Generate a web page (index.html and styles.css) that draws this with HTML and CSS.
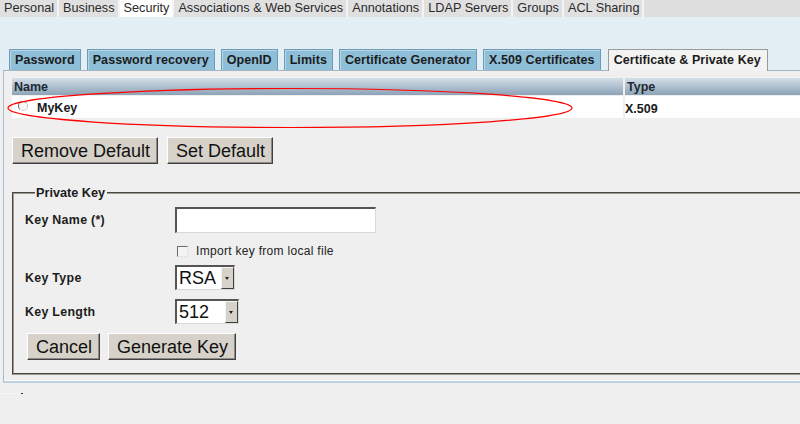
FILE: index.html
```html
<!DOCTYPE html>
<html>
<head>
<meta charset="utf-8">
<link rel="stylesheet" href="styles.css">
</head>
<body>
<div class="topnav">
  <span class="ttab">Personal</span>
  <span class="ttab">Business</span>
  <span class="ttab active">Security</span>
  <span class="ttab">Associations &amp; Web Services</span>
  <span class="ttab">Annotations</span>
  <span class="ttab">LDAP Servers</span>
  <span class="ttab">Groups</span>
  <span class="ttab">ACL Sharing</span>
</div>
<div class="bluebar">
  <span class="stab">Password</span>
  <span class="stab">Password recovery</span>
  <span class="stab">OpenID</span>
  <span class="stab">Limits</span>
  <span class="stab">Certificate Generator</span>
  <span class="stab">X.509 Certificates</span>
  <span class="stab active">Certificate &amp; Private Key</span>
</div>
<div class="panel">
  <div class="grid">
    <div class="th">Name</div>
    <div class="th">Type</div>
    <div class="td name"><span class="radio"></span>MyKey</div>
    <div class="td">X.509</div>
  </div>
  <div class="btnrow">
    <span class="btn">Remove Default</span>
    <span class="btn">Set Default</span>
  </div>
  <fieldset class="fs">
    <legend class="lg">Private Key</legend>
    <div class="frow r1">
      <span class="lbl">Key Name (*)</span>
      <span class="input"></span>
    </div>
    <div class="frow r2">
      <span class="lbl"></span>
      <span class="chk"><span class="cbox"></span>Import key from local file</span>
    </div>
    <div class="frow r3">
      <span class="lbl">Key Type</span>
      <span class="sel w60"><span class="val">RSA</span><span class="arr"></span></span>
    </div>
    <div class="frow r4">
      <span class="lbl">Key Length</span>
      <span class="sel w64"><span class="val">512</span><span class="arr"></span></span>
    </div>
    <div class="frow r5">
      <span class="btn">Cancel</span>
      <span class="btn">Generate Key</span>
    </div>
  </fieldset>
</div>
<div class="foot"><span class="dots"></span><span class="dot"></span></div>
<svg class="mark" width="800" height="424" viewBox="0 0 800 424"><ellipse cx="290" cy="108" rx="282" ry="19.5" fill="none" stroke="#ff0000" stroke-width="1.2"/></svg>
</body>
</html>
```
FILE: styles.css
```css
* { box-sizing: border-box; }
html, body { margin: 0; padding: 0; }
body {
  width: 800px;
  height: 424px;
  overflow: hidden;
  background: #efefef;
  font-family: "Liberation Sans", Arial, sans-serif;
  color: #222;
  position: relative;
}
.topnav {
  display: flex;
  height: 17px;
  background: #dedede;
}
.ttab {
  display: block;
  height: 17px;
  line-height: 16px;
  padding: 0 3px 0 4px;
  font-size: 12.7px;
  color: #2a2a2a;
  background: #e0e0e0;
  border-right: 2px solid #f4f4f4;
}
.ttab.active { background: #ffffff; }
.bluebar {
  height: 53px;
  background: #e3eef5;
  display: flex;
  align-items: flex-end;
  padding-left: 9px;
  gap: 6px;
  position: relative;
  z-index: 2;
}
.stab {
  display: block;
  height: 21px;
  line-height: 20px;
  padding: 0 5px;
  font-size: 12.5px;
  font-weight: bold;
  letter-spacing: 0.08px;
  color: #1c1c1c;
  background: #8ebed8;
  border: 1px solid #6f9bb4;
  border-bottom: none;
  box-shadow: inset 1px 1px 0 #b4d6e8;
}
.stab.active {
  background: #f3f3f3;
  border-color: #9a9a9a;
  box-shadow: none;
  height: 22px;
  margin-bottom: -1px;
  margin-left: 1px;
  padding: 0 6px 0 5px;
}
.panel {
  margin-left: 3px;
  height: 313px;
  border-top: 1px solid #a4b6c4;
  border-left: 1px solid #a9bccb;
  border-bottom: 2px solid #bcd1e2;
  box-shadow: inset 0 -1px 0 #ffffff;
  padding: 6px 0 0 8px;
  overflow: hidden;
}
.grid {
  display: grid;
  grid-template-columns: 611px 1fr;
  column-gap: 2px;
}
.th {
  height: 18px;
  line-height: 18px;
  padding-left: 2px;
  font-size: 12.5px;
  font-weight: bold;
  color: #1e2a34;
  background: linear-gradient(#d3dee7, #8da3b7);
  border-top: 1px solid #eef3f6;
}
.td {
  height: 22px;
  line-height: 22px;
  padding-top: 2px;
  font-size: 12.5px;
  font-weight: bold;
  color: #1a1a1a;
  background: #ffffff;
  margin-top: 1px;
}
.td.name {
  display: flex;
  align-items: center;
  padding-left: 6px;
}
.radio {
  width: 10px;
  height: 10px;
  border-radius: 50%;
  border: 1px solid #6a6a6a;
  border-right-color: #c8c8c8;
  border-bottom-color: #d0d0d0;
  background: #f8f8f8;
  margin-right: 9px;
  margin-top: -4px;
}
.btnrow {
  display: flex;
  gap: 9px;
  margin-top: 19px;
}
.btn {
  display: block;
  height: 27px;
  line-height: 26px;
  padding: 0 7px 0 8px;
  font-size: 18px;
  color: #111;
  background: #d6d2ca;
  border-top: 1px solid #ffffff;
  border-left: 1px solid #ffffff;
  border-right: 1px solid #404040;
  border-bottom: 1px solid #404040;
  box-shadow: inset -1px -1px 0 #8c8a86;
}
.fs {
  margin: 22px 0 0 0;
  width: 820px;
  padding: 7px 0 12px 11px;
  border: 2px groove #9d9a94;
  height: 189px;
}
.lg {
  padding: 0 2px 0 1px;
  margin-left: 10px;
  font-size: 12.7px;
  font-weight: bold;
  color: #1c1c1c;
  line-height: 14px;
}
.frow {
  display: flex;
  align-items: center;
}
.lbl {
  width: 150px;
  flex: none;
  font-size: 12.4px;
  font-weight: bold;
  letter-spacing: 0.3px;
  color: #1c1c1c;
}
.r1 { height: 26px; }
.r2 { height: 14px; margin-top: 11px; }
.r3 { height: 25px; margin-top: 7px; }
.r4 { height: 25px; margin-top: 9px; }
.r5 { height: 27px; margin-top: 9px; gap: 8px; padding-left: 2px; }
.input {
  display: block;
  width: 201px;
  height: 26px;
  background: #fff;
  border-top: 2px solid #555;
  border-left: 2px solid #555;
  border-right: 1px solid #d8d8d8;
  border-bottom: 1px solid #d8d8d8;
}
.chk {
  display: flex;
  align-items: center;
  font-size: 12px;
  letter-spacing: 0.3px;
  color: #222;
  padding-left: 2px;
}
.cbox {
  width: 11px;
  height: 11px;
  background: #f4f4f4;
  border-top: 1px solid #6a6a6a;
  border-left: 1px solid #6a6a6a;
  border-right: 1px solid #e6e6e6;
  border-bottom: 1px solid #e6e6e6;
  margin-right: 8px;
}
.sel {
  display: flex;
  height: 25px;
  background: #fff;
  border-top: 2px solid #555;
  border-left: 2px solid #555;
  border-right: 1px solid #d8d8d8;
  border-bottom: 1px solid #d8d8d8;
}
.w60 { width: 60px; }
.w64 { width: 64px; }
.val {
  flex: 1;
  font-size: 18px;
  line-height: 22px;
  padding-left: 2px;
  color: #111;
}
.arr {
  width: 13px;
  background: #d6d2ca;
  border-top: 1px solid #f4f4f4;
  border-left: 1px solid #f4f4f4;
  border-right: 1px solid #404040;
  border-bottom: 1px solid #404040;
  position: relative;
}
.arr::after {
  content: "";
  position: absolute;
  left: 3px;
  top: 9px;
  border-left: 2px solid transparent;
  border-right: 2px solid transparent;
  border-top: 3px solid #222;
}
.foot {
  display: flex;
  align-items: center;
  height: 20px;
  padding-left: 2px;
}
.dots {
  width: 16px;
  border-top: 1px dotted #ffffff;
}
.dot {
  width: 2px;
  height: 1px;
  background: #333;
  margin-left: 3px;
}
.mark {
  position: absolute;
  left: 0;
  top: 0;
  pointer-events: none;
  z-index: 5;
}
```
